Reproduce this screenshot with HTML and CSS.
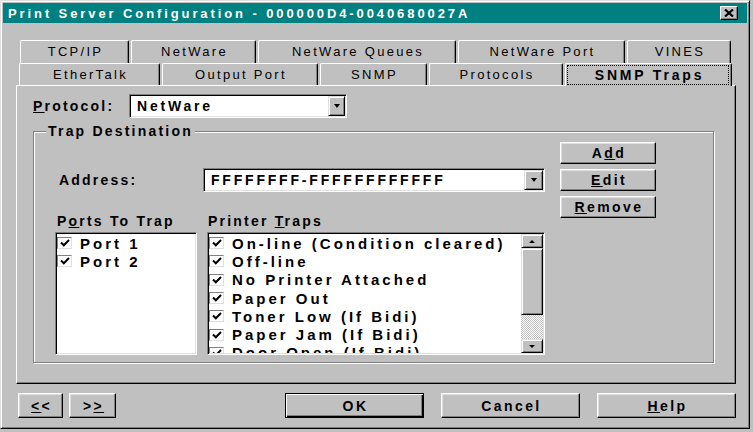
FILE: index.html
```html
<!DOCTYPE html>
<html>
<head>
<meta charset="utf-8">
<title>Print Server Configuration</title>
<link rel="stylesheet" href="styles.css">
</head>
<body>
<div class="window">
  <div class="titlebar">
    <span class="title">Print Server Configuration - 000000D4-0040680027A</span>
    <span class="close"><svg width="10" height="8" viewBox="0 0 10 8"><path d="M1 0.5 L9 7.5 M9 0.5 L1 7.5" stroke="#000" stroke-width="2.2" fill="none"/></svg></span>
  </div>
  <div class="content">
    <div class="tabs">
      <div class="tabrow back">
        <div class="tab t1">TCP/IP</div>
        <div class="tab t2">NetWare</div>
        <div class="tab t3">NetWare Queues</div>
        <div class="tab t4">NetWare Port</div>
        <div class="tab t5">VINES</div>
      </div>
      <div class="tabrow front">
        <div class="tab f1">EtherTalk</div>
        <div class="tab f2">Output Port</div>
        <div class="tab f3">SNMP</div>
        <div class="tab f4">Protocols</div>
        <div class="tab f5 selected"><span class="focus">SNMP Traps</span></div>
      </div>
    </div>
    <div class="panel">
      <div class="proto-row">
        <span class="lbl proto-lbl"><u>P</u>rotocol:</span>
        <div class="combo proto-combo">
          <span class="val">NetWare</span>
          <span class="drop"><span class="tri-down"></span></span>
        </div>
      </div>
      <div class="group">
        <span class="lbl legend">Trap Destination</span>
        <div class="left">
          <div class="addr-row">
            <span class="lbl addr-lbl">Address:</span>
            <div class="combo addr-combo">
              <span class="val">FFFFFFFF-FFFFFFFFFFFF</span>
              <span class="drop wide"><span class="tri-down"></span></span>
            </div>
          </div>
          <div class="list-labels">
            <span class="lbl l1">P<u>o</u>rts To Trap</span>
            <span class="lbl l2">Printer <u>T</u>raps</span>
          </div>
          <div class="lists">
            <div class="listbox ports">
              <div class="item"><span class="cb"><svg width="10" height="8" viewBox="0 0 10 8"><polyline points="1,3.5 3.8,6.3 9,1" stroke="#000" stroke-width="2" fill="none"/></svg></span>Port 1</div>
              <div class="item"><span class="cb"><svg width="10" height="8" viewBox="0 0 10 8"><polyline points="1,3.5 3.8,6.3 9,1" stroke="#000" stroke-width="2" fill="none"/></svg></span>Port 2</div>
            </div>
            <div class="listbox traps">
              <div class="items">
                <div class="item"><span class="cb"><svg width="10" height="8" viewBox="0 0 10 8"><polyline points="1,3.5 3.8,6.3 9,1" stroke="#000" stroke-width="2" fill="none"/></svg></span>On-line (Condition cleared)</div>
                <div class="item"><span class="cb"><svg width="10" height="8" viewBox="0 0 10 8"><polyline points="1,3.5 3.8,6.3 9,1" stroke="#000" stroke-width="2" fill="none"/></svg></span>Off-line</div>
                <div class="item"><span class="cb"><svg width="10" height="8" viewBox="0 0 10 8"><polyline points="1,3.5 3.8,6.3 9,1" stroke="#000" stroke-width="2" fill="none"/></svg></span>No Printer Attached</div>
                <div class="item"><span class="cb"><svg width="10" height="8" viewBox="0 0 10 8"><polyline points="1,3.5 3.8,6.3 9,1" stroke="#000" stroke-width="2" fill="none"/></svg></span>Paper Out</div>
                <div class="item"><span class="cb"><svg width="10" height="8" viewBox="0 0 10 8"><polyline points="1,3.5 3.8,6.3 9,1" stroke="#000" stroke-width="2" fill="none"/></svg></span>Toner Low (If Bidi)</div>
                <div class="item"><span class="cb"><svg width="10" height="8" viewBox="0 0 10 8"><polyline points="1,3.5 3.8,6.3 9,1" stroke="#000" stroke-width="2" fill="none"/></svg></span>Paper Jam (If Bidi)</div>
                <div class="item"><span class="cb"><svg width="10" height="8" viewBox="0 0 10 8"><polyline points="1,3.5 3.8,6.3 9,1" stroke="#000" stroke-width="2" fill="none"/></svg></span>Door Open (If Bidi)</div>
              </div>
              <div class="scrollbar">
                <span class="sbtn"><span class="tri-up"></span></span>
                <span class="thumb"></span>
                <span class="track"></span>
                <span class="sbtn"><span class="tri-down small"></span></span>
              </div>
            </div>
          </div>
        </div>
        <div class="side">
          <span class="btn">A<u>d</u>d</span>
          <span class="btn"><u>E</u>dit</span>
          <span class="btn"><u>R</u>emove</span>
        </div>
      </div>
    </div>
    <div class="bottom">
      <span class="btn b-prev"><u>&lt;</u>&lt;</span>
      <span class="btn b-next">&gt;<u>&gt;</u></span>
      <span class="btn b-ok default">OK</span>
      <span class="btn b-cancel">Cancel</span>
      <span class="btn b-help"><u>H</u>elp</span>
    </div>
  </div>
</div>
</body>
</html>
```

FILE: styles.css
```css
* { box-sizing: border-box; }

body {
  margin: 0;
  width: 753px;
  height: 432px;
  overflow: hidden;
  background: #c0c0c0;
  font-family: "Liberation Sans", Arial, sans-serif;
  color: #000;
}

.window {
  width: 750px;
  height: 429px;
  border: 1px solid;
  border-color: #dfdfdf #000 #000 #dfdfdf;
  box-shadow: inset 1px 1px #fff, inset -1px -1px #808080;
  padding: 2px;
  display: flex;
  flex-direction: column;
  background: #c0c0c0;
}

.titlebar {
  height: 20px;
  background: #008080;
  display: flex;
  align-items: center;
  justify-content: space-between;
  padding: 0 9px 0 5px;
}

.title {
  color: #fff;
  font-weight: bold;
  font-size: 13px;
  letter-spacing: 2.9px;
  white-space: nowrap;
}

.close {
  width: 18px;
  height: 14px;
  background: #c0c0c0;
  border: 1px solid;
  border-color: #fff #000 #000 #fff;
  box-shadow: inset -1px -1px #808080;
  display: flex;
  align-items: center;
  justify-content: center;
}

.content {
  padding: 17px 0 0 13px;
}

/* tabs */
.tabrow { display: flex; gap: 2px; }
.tabrow.back { height: 23px; margin-left: 4px; }
.tabrow.front { height: 22px; margin-left: 3px; }

.tab {
  height: 100%;
  border-top: 1px solid #fff;
  border-left: 1px solid #fff;
  border-right: 1px solid #000;
  box-shadow: inset -1px 0 #808080;
  border-top-left-radius: 2px;
  border-top-right-radius: 2px;
  display: flex;
  align-items: center;
  justify-content: center;
  padding-left: 2px;
  padding-bottom: 1px;
  font-size: 13px;
  letter-spacing: 2.3px;
  white-space: nowrap;
  background: #c0c0c0;
}

.t1 { width: 109px; }
.t2 { width: 125px; }
.t3 { width: 198px; }
.t4 { width: 167px; }
.t5 { width: 104px; }
.f1 { width: 141px; }
.f2 { width: 156px; }
.f3 { width: 107px; }
.f4 { width: 134px; }
.f5 { width: 167px; }

.tab.selected {
  height: 23px;
  margin-bottom: -1px;
  z-index: 1;
  font-weight: bold;
  font-size: 14px;
  letter-spacing: 2.8px;
  padding: 1px 2px 1px 1px;
  align-items: stretch;
}

.focus {
  flex: 1;
  border: 1px dotted #000;
  display: flex;
  align-items: center;
  justify-content: center;
  padding-left: 3px;
}

/* panel */
.panel {
  width: 720px;
  height: 299px;
  border: 1px solid;
  border-color: #fff #000 #000 #fff;
  box-shadow: inset -1px -1px #808080;
  padding: 8px 0 0 16px;
}

.lbl {
  font-weight: bold;
  font-size: 14px;
  letter-spacing: 2.2px;
  white-space: nowrap;
  line-height: 16px;
}

.proto-row { display: flex; align-items: center; height: 24px; }
.proto-lbl { width: 96px; }

.combo {
  height: 24px;
  background: #fff;
  border: 1px solid;
  border-color: #808080 #fff #fff #808080;
  box-shadow: inset 1px 1px #000, inset -1px -1px #dfdfdf;
  display: flex;
  align-items: center;
  padding: 1px 1px 1px 7px;
}

.combo .val {
  flex: 1;
  font-weight: bold;
  font-size: 14px;
  letter-spacing: 2.8px;
  white-space: nowrap;
  overflow: hidden;
}

.proto-combo { width: 218px; }
.addr-combo { width: 342px; }

.drop, .sbtn {
  width: 17px;
  height: 20px;
  flex: none;
  background: #c0c0c0;
  border: 1px solid;
  border-color: #dfdfdf #000 #000 #dfdfdf;
  box-shadow: inset 1px 1px #fff, inset -1px -1px #808080;
  display: flex;
  align-items: center;
  justify-content: center;
}
.drop.wide { width: 19px; }

.tri-down {
  width: 0; height: 0;
  border-left: 3.5px solid transparent;
  border-right: 3.5px solid transparent;
  border-top: 4px solid #000;
}
.tri-up {
  width: 0; height: 0;
  border-left: 3px solid transparent;
  border-right: 3px solid transparent;
  border-bottom: 3px solid #000;
}
.tri-down.small {
  border-left-width: 3px;
  border-right-width: 3px;
  border-top-width: 3px;
}

/* group box */
.group {
  position: relative;
  width: 681px;
  height: 232px;
  margin-top: 13px;
  border: 1px solid #808080;
  box-shadow: inset 1px 1px #fff, 1px 1px #fff;
  display: flex;
  padding: 10px 0 0 21px;
}

.legend {
  position: absolute;
  top: -9px;
  left: 12px;
  padding: 0 2px;
  background: #c0c0c0;
}

.left {
  width: 490px;
  display: flex;
  flex-direction: column;
}

.addr-row { display: flex; align-items: center; margin-top: 26px; }
.addr-lbl { width: 148px; padding-left: 4px; }

.list-labels { display: flex; margin-top: 21px; height: 16px; }
.l1 { width: 152px; padding-left: 2px; }
.l2 { padding-left: 1px; }

.lists { display: flex; gap: 10px; margin-top: 3px; height: 123px; }

.listbox {
  background: #fff;
  border: 1px solid;
  border-color: #808080 #fff #fff #808080;
  box-shadow: inset 1px 1px #000, inset -1px -1px #dfdfdf;
  padding: 1px;
  overflow: hidden;
}
.ports { width: 142px; }
.traps { width: 338px; display: flex; }
.items { flex: 1; overflow: hidden; }

.item {
  display: flex;
  align-items: center;
  height: 18.3px;
  font-weight: bold;
  font-size: 15px;
  letter-spacing: 3px;
  white-space: nowrap;
}

.cb {
  width: 15px;
  height: 12px;
  flex: none;
  border: 1px solid;
  border-color: #808080 #dfdfdf #dfdfdf #808080;
  margin-right: 8px;
  display: flex;
  align-items: center;
  justify-content: center;
  background: #fff;
}

.scrollbar {
  width: 22px;
  display: flex;
  flex-direction: column;
}
.scrollbar .sbtn { width: 22px; height: 14px; }
.thumb {
  height: 67px;
  background: #c0c0c0;
  border: 1px solid;
  border-color: #dfdfdf #000 #000 #dfdfdf;
  box-shadow: inset 1px 1px #fff, inset -1px -1px #808080;
}
.track {
  flex: 1;
  background: repeating-conic-gradient(#fff 0 25%, #c0c0c0 0 50%) 0 0 / 2px 2px;
}

/* buttons */
.side {
  display: flex;
  flex-direction: column;
  gap: 5px;
  margin-left: 15px;
}

.btn {
  background: #c0c0c0;
  border: 1px solid;
  border-color: #fff #000 #000 #fff;
  box-shadow: inset -1px -1px #808080, inset 1px 1px #dfdfdf;
  display: flex;
  align-items: center;
  justify-content: center;
  font-weight: bold;
  font-size: 14px;
  letter-spacing: 2.4px;
  padding-left: 2px;
  white-space: nowrap;
}
.side .btn { width: 96px; height: 22px; }

.bottom {
  display: flex;
  margin-top: 9px;
  margin-left: 2px;
  height: 25px;
}
.bottom .btn { height: 25px; }
.b-prev { width: 45px; }
.b-next { width: 47px; margin-left: 6px; }
.b-ok { width: 139px; margin-left: 169px; }
.b-cancel { width: 139px; margin-left: 17px; }
.b-help { width: 139px; margin-left: 17px; }

.btn.default {
  border-color: #000;
  box-shadow: inset 1px 1px #fff, inset -1px -1px #000, inset -2px -2px #808080;
}
```
